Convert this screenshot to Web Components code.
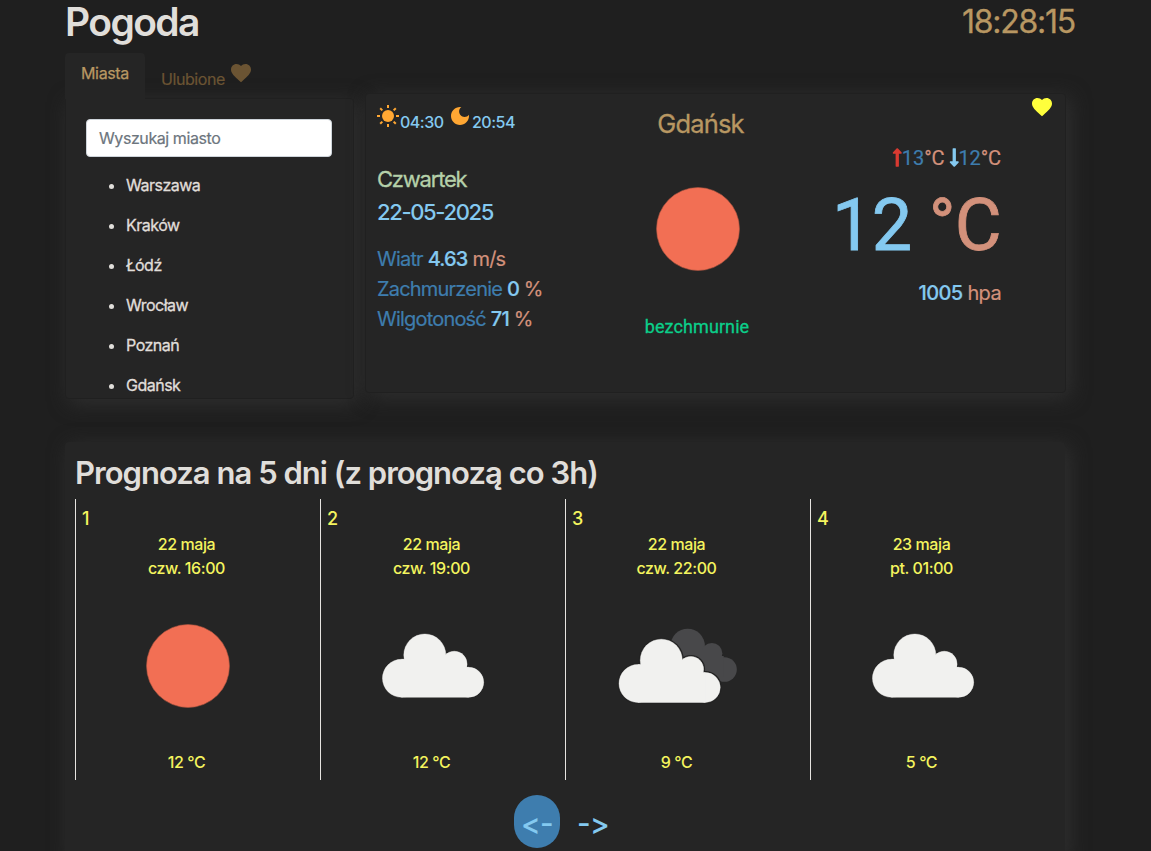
<!DOCTYPE html>
<html lang="pl">
<head>
<meta charset="utf-8">
<title>Pogoda</title>
<style>
  html, body { margin: 0; height: 851px; overflow: hidden; background: #1f1f1f; }
  body { font-family: Inter, "Noto Sans", sans-serif; font-size: 16px; line-height: 1.5; color: #e0deda;
    --card: #252525; --glow: #303030; --gold: #b89762; --sky: #84c9f0; --blue: #3e7dae; --salmon: #d3917b; --yellow: #f4f45e; }
</style>
</head>
<body>
<weather-app></weather-app>
<script>
const define = (name, html, setup) => customElements.define(name, class extends HTMLElement {
  constructor() {
    super();
    this.attachShadow({ mode: 'open' }).innerHTML = html;
  }
  connectedCallback() { if (setup) setup(this, this.shadowRoot); }
});

const HEART = 'M12 21.35l-1.45-1.32C5.4 15.36 2 12.28 2 8.5 2 5.42 4.42 3 7.5 3c1.74 0 3.41.81 4.5 2.09C13.09 3.81 14.76 3 16.5 3 19.58 3 22 5.42 22 8.5c0 3.78-3.4 6.86-8.55 11.54L12 21.35z';
const MOON = 'M12 3c-4.97 0-9 4.03-9 9s4.03 9 9 9 9-4.03 9-9c0-.46-.04-.92-.1-1.36-.98 1.37-2.58 2.26-4.4 2.26-2.98 0-5.4-2.42-5.4-5.4 0-1.81.89-3.42 2.26-4.4-.44-.06-.9-.1-1.36-.1z';
const ARROW = 'M88 166.059V468c0 6.627 5.373 12 12 12h56c6.627 0 12-5.373 12-12V166.059h46.059c21.382 0 32.09-25.851 16.971-40.971l-86.059-86.059c-9.373-9.373-24.569-9.373-33.941 0l-86.059 86.059c-15.119 15.119-4.411 40.971 16.971 40.971H88z';
const GLYPHS = {
  heart: [24, 24, `<path fill="currentColor" d="${HEART}"/>`],
  sun: [24, 24, `<g fill="currentColor"><circle cx="12" cy="12" r="6"/>${[0,45,90,135,180,225,270,315].map(a => `<path d="M11 1h2v3h-2z" transform="rotate(${a} 12 12)"/>`).join('')}</g>`],
  moon: [24, 24, `<path fill="currentColor" d="${MOON}"/>`],
  up: [256, 512, `<path fill="currentColor" d="${ARROW}"/>`],
  down: [256, 512, `<path fill="currentColor" transform="rotate(180 128 256)" d="${ARROW}"/>`],
};
define('app-icon', '<style>:host{display:inline-block;flex:none}svg{display:block;width:100%;height:100%}</style><div></div>', (el, root) => {
  const [w, h, body] = GLYPHS[el.getAttribute('name')];
  root.querySelector('div').innerHTML = `<svg viewBox="0 0 ${w} ${h}">${body}</svg>`;
});

// A cloud is four round lobes joined by a flat-based body; it spans 0..101 by 0..63.
const LOBES = '<circle cx="19" cy="44.3" r="19"/><circle cx="42.3" cy="21" r="21"/><circle cx="71.8" cy="30" r="12.8"/><circle cx="86.2" cy="48.3" r="15"/><path d="M19 25.3H72V33.3H86.2V63.3H19z"/>';
const cloud = (x, y, attrs) => `<g transform="translate(${x} ${y})" ${attrs}>${LOBES}</g>`;
const whiteCloud = (x, y) => cloud(x, y, 'fill="#8e8e8c" stroke="#8e8e8c" stroke-width=".7"') + cloud(x, y, 'fill="#f1f1ef"');
const SKIES = {
  clear: '<circle cx="76" cy="76" r="41.5" fill="#f26f54" stroke="#a9543f" stroke-width=".6"/>',
  clouds: whiteCloud(25.5, 44),
  broken: `<g transform="translate(51 38.8) scale(.82)" fill="#48484a">${LOBES.replace('cx="86.2" cy="48.3"', 'cx="87.2" cy="49.6"').replace('V63.3H19', 'V58H30')}</g>`
    + cloud(17, 49.2, 'fill="#222" stroke="#222" stroke-width="3"') + whiteCloud(17, 49.2),
};
define('sky-picture', '<style>:host{display:block;width:150px;height:150px}svg{display:block}</style><div></div>', (el, root) => {
  root.querySelector('div').innerHTML = `<svg width="150" height="150" viewBox="0 0 150 150">${SKIES[el.getAttribute('sky')]}</svg>`;
});

define('page-header', `<style>
  :host { display:flex; justify-content:space-between; align-items:flex-start; width:1010px; height:53px; }
  h1 { margin:0; font-size:39px; line-height:44px; font-weight:600; letter-spacing:-1.6px; }
  time { font-size:32px; line-height:44px; color:var(--gold); letter-spacing:-1.25px; -webkit-text-stroke:.3px currentColor; }
</style><h1>Pogoda</h1><time>18:28:15</time>`);

define('city-panel', `<style>
  :host { display:block; width:289px; }
  nav { display:flex; height:45px; }
  .tab { box-sizing:border-box; width:80px; height:46px; padding:8px 0 0 16px; border-radius:4px 4px 0 0; background:var(--card); color:var(--gold); letter-spacing:-.35px; position:relative; z-index:1; -webkit-text-stroke:.25px currentColor; }
  .fav { display:flex; align-items:flex-start; color:#6b5433; padding:14px 0 0 16px; letter-spacing:-.42px; -webkit-text-stroke:.2px currentColor; }
  .fav app-icon { width:24px; height:24px; margin:-6px 0 0 4.5px; }
  .box { box-sizing:border-box; width:289px; height:301px; overflow:hidden; padding:20px; background:var(--card); border:1px solid #202020; border-radius:0 4px 4px 4px; box-shadow:4px 4px 20px var(--glow); }
  .search { box-sizing:border-box; height:38px; width:246px; background:#fff; border:1px solid #ced4da; border-radius:4px; color:#6c757d; padding:6px 12px; letter-spacing:-.42px; -webkit-text-stroke:.2px currentColor; }
  ul { margin:8px 0 0; padding:0 0 0 40px; }
  li { height:24px; padding:8px 0; letter-spacing:-.5px; -webkit-text-stroke:.3px currentColor; }
</style>
<nav><div class="tab">Miasta</div><div class="fav">Ulubione <app-icon name="heart"></app-icon></div></nav>
<div class="box"><div class="search">Wyszukaj miasto</div>
<ul><li>Warszawa</li><li>Kraków</li><li>Łódź</li><li>Wrocław</li><li>Poznań</li><li>Gdańsk</li></ul></div>`);

define('current-weather', `<style>
  :host { box-sizing:border-box; display:grid; grid-template-columns:230px 180px 1fr; width:701px; height:300px; margin-top:40px; padding:0 64px 0 11px; background:var(--card); border:1px solid #202020; border-radius:4px; box-shadow:4px 4px 20px var(--glow); position:relative; }
  .sun { display:flex; height:24px; margin-top:10px; color:var(--sky); font-weight:500; letter-spacing:-.5px; line-height:36px; }
  .sun app-icon { width:24px; height:24px; color:#ffa733; }
  .sun app-icon:first-child { margin-left:-1px; }
  .sun span { width:48px; }
  .day { margin-top:35px; font-size:22px; line-height:32px; color:#b5d0a9; letter-spacing:-1.2px; -webkit-text-stroke:.3px currentColor; }
  .date { font-size:22px; line-height:34px; color:var(--sky); font-weight:500; letter-spacing:-1.35px; }
  .stats { margin-top:15px; font-size:20px; line-height:30px; color:var(--blue); letter-spacing:-.8px; -webkit-text-stroke:.2px currentColor; }
  b { color:var(--sky); font-weight:500; } i { font-style:normal; color:var(--salmon); }
  .mid { display:flex; flex-direction:column; align-items:center; }
  .city { margin:11px 0 0 7px; font-size:25.5px; line-height:38px; color:var(--gold); letter-spacing:-.85px; -webkit-text-stroke:.3px currentColor; }
  .mid sky-picture { margin-top:10px; }
  .desc { margin-top:8px; color:#0bcf8a; font-family:Roboto,sans-serif; font-size:18px; line-height:32px; letter-spacing:.1px; -webkit-text-stroke:.3px currentColor; }
  .right { display:flex; flex-direction:column; align-items:flex-end; font-family:Roboto,sans-serif; }
  .range { display:flex; margin-top:49px; font-size:20px; line-height:30px; color:var(--blue); letter-spacing:-.1px; -webkit-text-stroke:.2px currentColor; }
  .range app-icon { width:10.5px; height:21px; margin-top:4px; margin-right:-1px; }
  .range app-icon[name=down] { margin-left:4.5px; }
  .now { margin-top:10px; font-size:72px; line-height:85px; color:var(--sky); letter-spacing:-.7px; -webkit-text-stroke:.8px currentColor; }
  .press { margin-top:10px; font-family:Inter,sans-serif; font-size:20px; line-height:30px; letter-spacing:-.65px; -webkit-text-stroke:.2px currentColor; }
  .like { position:absolute; right:11px; top:1px; width:24px; height:24px; color:#ffff3c; }
</style>
<div><div class="sun"><app-icon name="sun"></app-icon><span>04:30</span><app-icon name="moon"></app-icon><span>20:54</span></div>
<div class="day">Czwartek</div><div class="date">22-05-2025</div>
<div class="stats">Wiatr <b>4.63</b> <i>m/s</i><br>Zachmurzenie <b>0</b> <i>%</i><br>Wilgotoność <b>71</b> <i>%</i></div></div>
<div class="mid"><div class="city">Gdańsk</div><sky-picture sky="clear"></sky-picture><div class="desc">bezchmurnie</div></div>
<div class="right"><div class="range"><app-icon name="up" style="color:#d93a31"></app-icon>13<i>°C</i><app-icon name="down" style="color:var(--sky)"></app-icon>12<i>°C</i></div>
<div class="now">12 <i>°C</i></div><div class="press"><b>1005</b> <i>hpa</i></div></div>
<app-icon class="like" name="heart"></app-icon>`);

define('forecast-slot', `<style>
  :host { box-sizing:border-box; display:flex; flex-direction:column; width:245px; height:281px; border-left:1px solid #e6e4e0; color:var(--yellow); font-weight:500; letter-spacing:-.42px; }
  .n { font-size:18px; line-height:27px; padding:6px 0 0 6px; }
  .t { width:221px; text-align:center; }
  sky-picture { margin:10px 0 0 36px; }
  .d { margin-top:10px; }
</style><div class="n"></div><div class="t"><slot></slot></div><div class="pic"></div><div class="t d"></div>`, (el, root) => {
  root.querySelector('.n').textContent = el.getAttribute('n');
  root.querySelector('.d').textContent = el.getAttribute('temp');
  const pic = document.createElement('sky-picture');
  pic.setAttribute('sky', el.getAttribute('sky'));
  root.querySelector('.pic').replaceWith(pic);
});

define('forecast-panel', `<style>
  :host { box-sizing:border-box; display:block; width:1000px; height:416px; margin-top:43px; padding:10px; background:var(--card); border-radius:4px; box-shadow:4px 4px 20px var(--glow); }
  h2 { margin:2px 0 7px; font-size:31px; line-height:38px; font-weight:600; letter-spacing:-.98px; }
  .row { display:flex; }
  .pager { display:flex; margin:15px 0 0 439px; font-size:29.5px; line-height:57px; color:var(--sky); font-weight:500; }
  .pager span { width:46px; height:53px; text-align:center; border-radius:23px; letter-spacing:-.6px; }
  .pager .on { background:var(--blue); margin-right:10px; }
</style><h2>Prognoza na 5 dni (z prognozą co 3h)</h2><div class="row"></div>
<div class="pager"><span class="on">&lt;-</span><span>-&gt;</span></div>`, (el, root) => {
  root.querySelector('.row').innerHTML = [
    [1, '22 maja', 'czw. 16:00', 'clear', '12 °C'], [2, '22 maja', 'czw. 19:00', 'clouds', '12 °C'],
    [3, '22 maja', 'czw. 22:00', 'broken', '9 °C'], [4, '23 maja', 'pt. 01:00', 'clouds', '5 °C'],
  ].map(([n, d, h, s, t]) => `<forecast-slot n="${n}" temp="${t}" sky="${s}">${d}<br>${h}</forecast-slot>`).join('');
});

define('weather-app', `<style>
  :host { display:block; width:1020px; margin:0 0 0 65px; }
  main { display:flex; gap:11px; align-items:flex-start; }
</style><page-header></page-header><main><city-panel></city-panel><current-weather></current-weather></main><forecast-panel></forecast-panel>`);
</script>
</body>
</html>
